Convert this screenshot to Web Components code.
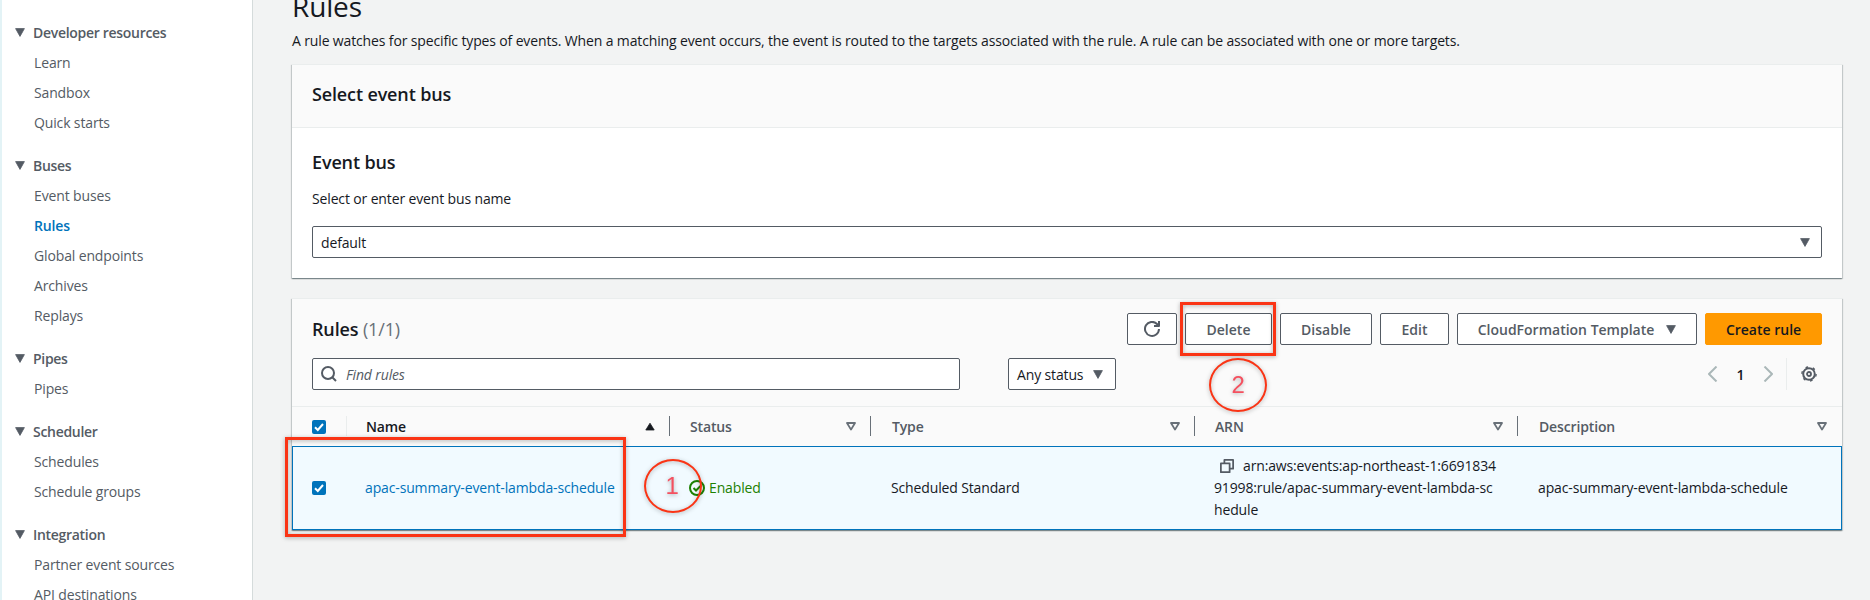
<!doctype html>
<html><head><meta charset="utf-8"><style>
html,body{margin:0;padding:0;height:600px;overflow:hidden;background:#f2f3f3;font-family:"Open Sans","Noto Sans",sans-serif;color:#16191f;letter-spacing:-.14px}
</style></head><body>
<template id="t-icon"><style>:host{display:inline-flex;width:16px;height:16px}svg{width:100%;height:100%;fill:none;stroke:currentColor;stroke-width:2;stroke-linejoin:round}</style><svg viewBox="0 0 16 16"></svg></template>
<aws-app></aws-app>
<script>
const ICONS={
refresh:'<path d="M10 5h5V0"/><path d="M15 8a7 7 0 1 1-2-5l2 2"/>',
copy:'<path d="M1 5h10v10H1z"/><path d="M5 5V1h10v10h-4"/>',
search:'<circle cx="7" cy="7" r="6"/><path d="M11.5 11.5L15 15"/>',
left:'<path d="M11.5 .5L4 8l7.5 7.5"/>',right:'<path d="M4.5 .5L12 8l-7.5 7.5"/>',
gear:'<circle cx="8" cy="8" r="2" stroke-width="1.8"/><circle cx="8" cy="8" r="5.8" stroke-width="2"/><circle cx="8" cy="8" r="7.1" stroke-width="1.4" stroke-dasharray="2.6 4.83"/>',
};
class AwsIcon extends HTMLElement{constructor(){super();const s=this.attachShadow({mode:'open'});s.appendChild(document.getElementById('t-icon').content.cloneNode(true));s.querySelector('svg').innerHTML=ICONS[this.getAttribute('name')]||''}}
customElements.define('aws-icon',AwsIcon);

class AwsTri extends HTMLElement{constructor(){super();const o=this.hasAttribute('open'),up=this.hasAttribute('up');this.attachShadow({mode:'open'}).innerHTML=`<style>:host{display:inline-flex;width:${this.getAttribute('w')||10}px;height:${this.getAttribute('h')||9}px}svg{width:100%;height:100%}</style><svg viewBox="0 0 10 9" preserveAspectRatio="none"><path d="${up?'M5 1.2L9.2 8H.8z':o?'M1 1h8L5 7.6z':'M.6 .6h8.8L5 8.4z'}" fill="${o?'none':'currentColor'}" stroke="currentColor" stroke-width="${o?1.8:.8}" stroke-linejoin="round"/></svg>`}}
customElements.define('aws-tri',AwsTri);

class NavSection extends HTMLElement{constructor(){super();this.attachShadow({mode:'open'}).innerHTML=`<style>
:host{display:block;margin-bottom:15px}
.h{display:flex;align-items:center;height:24px;margin-bottom:4px;font-weight:600;font-size:14px;color:#545b64;letter-spacing:-.3px}
.h aws-tri{margin:0 8px 0 13px}
::slotted(a){display:block;height:30px;line-height:30px;padding-left:32px;font-size:14px;color:#545b64}
::slotted(a.on){color:#0073bb;font-weight:600}
</style><div class="h"><aws-tri></aws-tri><span>${this.getAttribute('label')}</span></div><slot></slot>`}}
customElements.define('nav-section',NavSection);

class SideNav extends HTMLElement{constructor(){super();this.attachShadow({mode:'open'}).innerHTML=`<style>
:host{display:block;box-sizing:border-box;width:253px;flex:none;height:600px;background:#fff;border-left:2px solid #e3f3f6;border-right:1px solid #d5dbdb;padding-top:20px;overflow:hidden}
</style><slot></slot>`}}
customElements.define('side-nav',SideNav);

class AwsBtn extends HTMLElement{constructor(){super();this.attachShadow({mode:'open'}).innerHTML=`<style>
:host{display:inline-flex;box-sizing:border-box;height:32px;align-items:center;justify-content:center;gap:12px;border:1px solid #545b64;border-radius:2px;background:#fff;color:#545b64;font-weight:600;font-size:14px;letter-spacing:0}
:host([primary]){background:#ff9900;border-color:#ff9900;color:#16191f}
</style><slot></slot>`}}
customElements.define('aws-btn',AwsBtn);

class AwsCard extends HTMLElement{constructor(){super();this.attachShadow({mode:'open'}).innerHTML=`<style>
:host{display:block;background:#fff;border-top:1px solid #eaeded;box-shadow:0 1px 1px 0 rgba(0,28,36,.3),1px 1px 1px 0 rgba(0,28,36,.15),-1px 1px 1px 0 rgba(0,28,36,.15)}
</style><slot></slot>`}}
customElements.define('aws-card',AwsCard);

class BusCard extends HTMLElement{constructor(){super();this.attachShadow({mode:'open'}).innerHTML=`<style>
:host{display:block}
.head{box-sizing:border-box;height:63px;background:#fafafa;border-bottom:1px solid #eaeded;display:flex;align-items:center;padding:0 0 4px 20px;font-size:18px;font-weight:600}
.body{box-sizing:border-box;height:150px;padding:22px 20px 0;background:#fff}
h3{margin:0;font-size:18px;font-weight:600;line-height:24px}
p{margin:14px 0 0;font-size:14px;line-height:22px}
.sel{margin-top:16px;box-sizing:border-box;height:32px;border:1px solid #545b64;border-radius:2px;display:flex;align-items:center;justify-content:space-between;padding:0 11px 0 8px;font-size:14px;background:#fff}
aws-tri{color:#545b64}
</style><aws-card><div class="head">Select event bus</div><div class="body"><h3>Event bus</h3><p>Select or enter event bus name</p><div class="sel"><span>default</span><aws-tri></aws-tri></div></div></aws-card>`}}
customElements.define('bus-card',BusCard);

class RulesTable extends HTMLElement{constructor(){super();this.attachShadow({mode:'open'}).innerHTML=`<style>
:host{display:block;margin-top:20px}
.top{box-sizing:border-box;height:108px;background:#fafafa;border-bottom:1px solid #eaeded;padding:14px 20px 0}
.r1{display:flex;align-items:center;height:32px}
.title{font-size:18px;font-weight:600;flex:1}.title span{font-weight:400;color:#687078}
.btns{display:flex;gap:8px}
.r2{display:flex;align-items:center;height:32px;margin-top:13px}
.find{box-sizing:border-box;width:648px;height:32px;border:1px solid #545b64;border-radius:2px;background:#fff;display:flex;align-items:center;padding-left:8px;gap:9px;font-size:14px;font-style:italic;color:#545b64}
.any{box-sizing:border-box;width:108px;height:32px;margin-left:48px;border:1px solid #545b64;border-radius:2px;background:#fff;display:flex;align-items:center;justify-content:space-between;padding:0 12px 0 8px;font-size:14px}
.any aws-tri{color:#545b64}
.pg{margin-left:auto;display:flex;align-items:center;height:32px;color:#aab7b8;padding-right:5px}
.pg b{color:#16191f;font-size:14px;font-weight:600;width:39px;text-align:center}
.pg i{display:block;width:1px;height:32px;background:#eaeded;margin:0 14px 0 10px}
.pg .g{color:#545b64}
.grid{display:grid;grid-template-columns:54px 323px 201px 324px 323px 325px}
.hc{box-sizing:border-box;height:39px;background:#fafafa;display:flex;align-items:center;font-size:14px;font-weight:600;color:#545b64;padding:0 14px 0 21px;position:relative;justify-content:space-between}
.hc::before{content:"";position:absolute;left:0;top:9px;height:20px;width:1px;background:#687078}
.hc:first-child::before{display:none}
.hc:nth-child(2)::before{background:#eaeded}
.hc:first-child{padding:0 0 0 20px}
.hc:nth-child(2){padding-left:20px}
.hc:nth-child(4),.hc:nth-child(6){padding-left:22px}
.hc.n{color:#16191f}.hc.n aws-tri{color:#16191f}
.hc aws-tri{color:#687078}
.row{grid-column:1/-1;display:grid;grid-template-columns:subgrid;box-sizing:border-box;height:84px;background:#f1faff;border:1px solid #0073bb}
.c{display:flex;align-items:center;padding-left:21px;font-size:14px;line-height:22px;white-space:nowrap}
.c:first-child{padding-left:19px}
.row .c:nth-child(2){padding-left:19px}
.row .c:nth-child(3){padding-left:20px}
.row .c:nth-child(4),.row .c:nth-child(6){padding-left:21px}
.c a{color:#0073bb}
.ok{color:#1d8102;gap:4px;display:flex;align-items:center}
.ok svg{width:16px;height:16px}
.arn{display:block;padding-left:20px;align-self:center}
.arn aws-icon{vertical-align:-2px;margin:0 9px 0 6px;color:#545b64;width:14px;height:14px}
.cb{display:block;box-sizing:border-box;width:14px;height:14px;background:#0073bb;border-radius:2px}
.cb svg{display:block;width:14px;height:14px}
</style><aws-card>
<div class="top">
<div class="r1"><div class="title">Rules <span>(1/1)</span></div><div class="btns">
<aws-btn style="width:50px"><aws-icon name="refresh"></aws-icon></aws-btn>
<aws-btn style="width:87px">Delete</aws-btn><aws-btn style="width:92px">Disable</aws-btn><aws-btn style="width:69px">Edit</aws-btn>
<aws-btn style="width:240px">CloudFormation Template <aws-tri></aws-tri></aws-btn><aws-btn primary style="width:117px">Create rule</aws-btn></div></div>
<div class="r2"><div class="find"><aws-icon name="search" style="color:#545b64"></aws-icon><span>Find rules</span></div>
<div class="any"><span>Any status</span><aws-tri></aws-tri></div>
<div class="pg"><aws-icon name="left"></aws-icon><b>1</b><aws-icon name="right"></aws-icon><i></i><aws-icon class="g" name="gear"></aws-icon></div></div>
</div>
<div class="grid">
<div class="hc"><span class="cb"><svg viewBox="0 0 14 14"><path d="M3 7.2l2.8 2.8L11 4" fill="none" stroke="#fff" stroke-width="2"/></svg></span></div>
<div class="hc n"><span>Name</span><aws-tri up></aws-tri></div>
<div class="hc"><span>Status</span><aws-tri open></aws-tri></div>
<div class="hc"><span>Type</span><aws-tri open></aws-tri></div>
<div class="hc"><span>ARN</span><aws-tri open></aws-tri></div>
<div class="hc" style="padding-right:15px"><span>Description</span><aws-tri open></aws-tri></div>
<div class="row">
<div class="c"><span class="cb"><svg viewBox="0 0 14 14"><path d="M3 7.2l2.8 2.8L11 4" fill="none" stroke="#fff" stroke-width="2"/></svg></span></div>
<div class="c"><a>apac-summary-event-lambda-schedule</a></div>
<div class="c"><span class="ok"><svg viewBox="0 0 16 16" fill="none" stroke="currentColor" stroke-width="2"><circle cx="8" cy="8" r="7"/><path d="M4.5 8l2.5 2.5L11.5 6"/></svg>Enabled</span></div>
<div class="c">Scheduled Standard</div>
<div class="c arn"><aws-icon name="copy"></aws-icon>arn:aws:events:ap-northeast-1:6691834<br>91998:rule/apac-summary-event-lambda-sc<br>hedule</div>
<div class="c">apac-summary-event-lambda-schedule</div>
</div></div></aws-card>`}}
customElements.define('rules-table',RulesTable);

class Callout extends HTMLElement{constructor(){super();const a=k=>this.getAttribute(k);this.attachShadow({mode:'open'}).innerHTML=`<style>
:host{position:absolute;left:${a('x')}px;top:${a('y')}px;width:${a('w')}px;height:${a('h')}px;box-sizing:border-box;border:${a('round')?2:3}px solid #fa3415;pointer-events:none;${a('round')?'border-radius:50%;display:flex;align-items:center;justify-content:center;':''}filter:drop-shadow(0 1px 2px rgba(0,0,0,.3));color:#f4505f;font:400 24px "Liberation Sans",sans-serif}
</style><slot></slot>`}}
customElements.define('call-out',Callout);

class AwsApp extends HTMLElement{constructor(){super();this.attachShadow({mode:'open'}).innerHTML=`<style>
:host{display:flex;position:relative;height:600px;overflow:hidden}
main{flex:1;min-width:0;padding:0 28px 0 39px}
h1{margin:-12px 0 0;font-size:28px;font-weight:400;line-height:36px}
.d{margin:6px 0 12px;font-size:14px;line-height:22px}
a{cursor:pointer}
</style>
<side-nav>
<nav-section label="Developer resources"><a>Learn</a><a>Sandbox</a><a>Quick starts</a></nav-section>
<nav-section label="Buses"><a>Event buses</a><a class="on">Rules</a><a>Global endpoints</a><a>Archives</a><a>Replays</a></nav-section>
<nav-section label="Pipes"><a>Pipes</a></nav-section>
<nav-section label="Scheduler"><a>Schedules</a><a>Schedule groups</a></nav-section>
<nav-section label="Integration"><a>Partner event sources</a><a>API destinations</a></nav-section>
</side-nav>
<main>
<h1>Rules</h1>
<p class="d">A rule watches for specific types of events. When a matching event occurs, the event is routed to the targets associated with the rule. A rule can be associated with one or more targets.</p>
<bus-card></bus-card>
<rules-table></rules-table>
</main>
<call-out x="285" y="437" w="341" h="100"></call-out>
<call-out x="644" y="459" w="58" h="54" round="1"><span style="margin-left:-2px">1</span></call-out>
<call-out x="1180" y="302" w="96" h="54"></call-out>
<call-out x="1209" y="358" w="58" h="54" round="1">2</call-out>
`}}
customElements.define('aws-app',AwsApp);
</script>
</body></html>
